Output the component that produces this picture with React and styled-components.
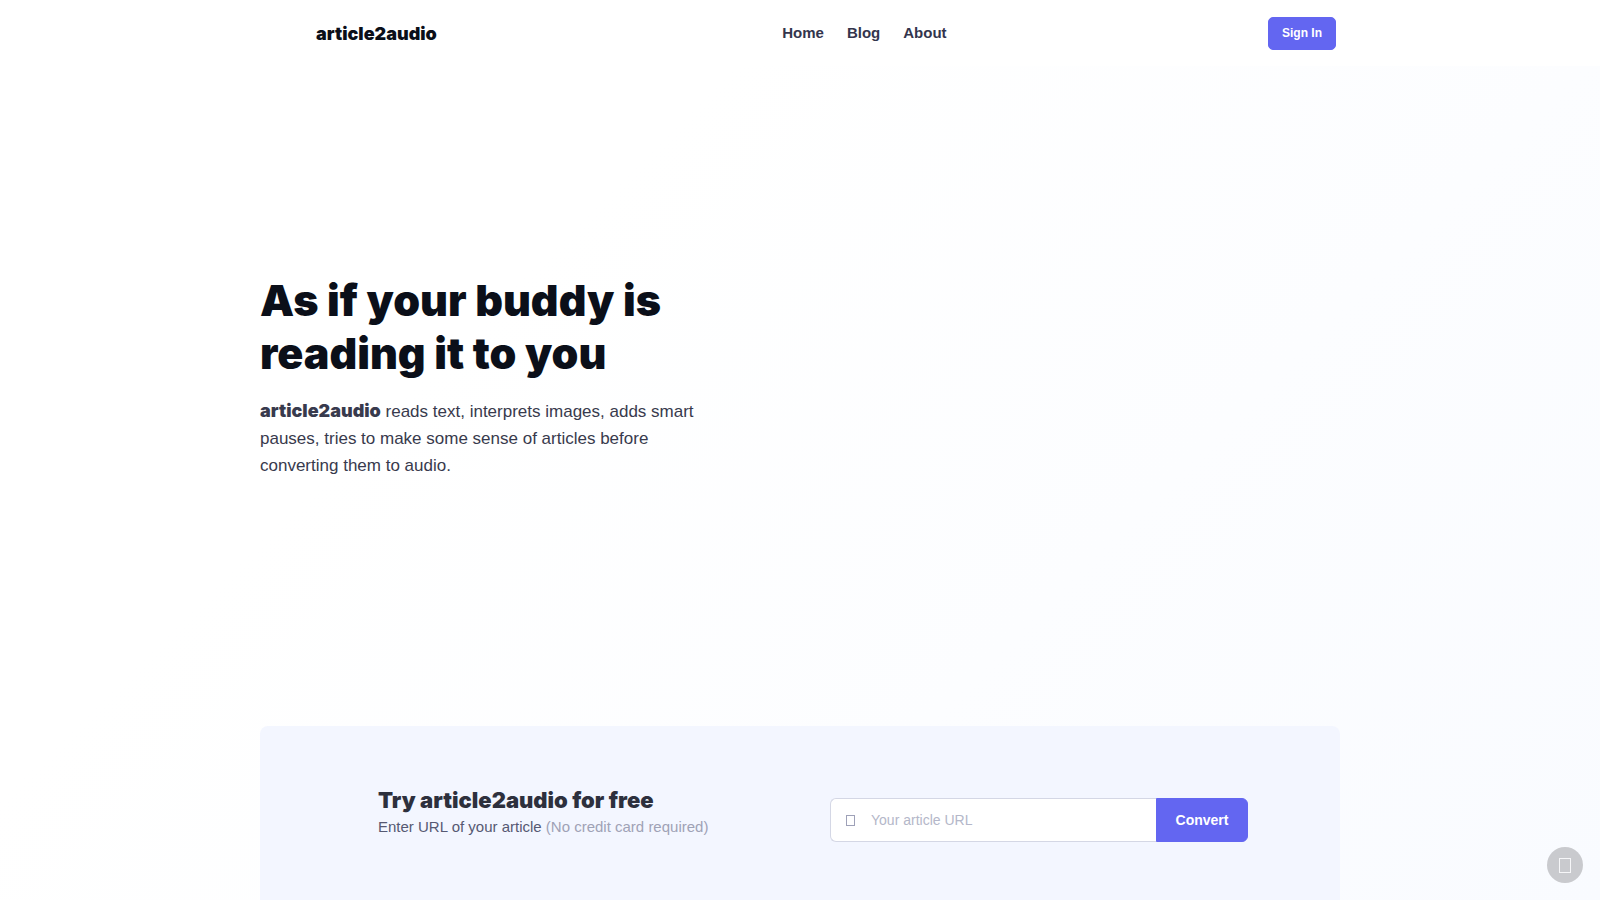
import React from "react";
import styled, { createGlobalStyle } from "styled-components";

const GlobalStyle = createGlobalStyle`
  *, *::before, *::after { box-sizing: border-box; }
  body {
    margin: 0;
    color: #33354d;
    background: #fff;
    font-family: "Liberation Sans", Arial, sans-serif;
    font-size: 15px;
    line-height: 24px;
  }
  a { color: inherit; text-decoration: none; }
  button, input { font: inherit; }
`;

const display = `
  font-family: Inter, "Arial Black", sans-serif;
  font-weight: 900;
`;

const Page = styled.div`
  min-height: 100vh;
  display: flex;
  flex-direction: column;
`;

const Header = styled.header`
  background: #fff;
`;

const HeaderInner = styled.div`
  max-width: 1080px;
  min-height: 66px;
  margin: 0 auto;
  padding: 0 4px 0 56px;
  display: flex;
  justify-content: space-between;
  align-items: center;
`;

const Brand = styled.a`
  ${display}
  color: #0b0f19;
  font-size: 18px;
  padding: 2px 24px 0 0;
`;

const Nav = styled.nav`
  display: flex;
  gap: 23px;
`;

const NavLink = styled.a`
  color: #33354d;
  font-weight: 700;
`;

const SignIn = styled.button`
  height: 33px;
  padding: 0 13px;
  border: 1px solid #6366f1;
  border-radius: 5px;
  background: #6366f1;
  color: #fff;
  font-size: 12px;
  line-height: 24px;
  font-weight: 700;
`;

const Main = styled.main`
  flex: 1;
  display: flex;
  flex-direction: column;
  background: linear-gradient(135deg, #fff 30%, #f9fbff 100%);
`;

const Container = styled.div`
  width: 100%;
  max-width: 1080px;
  margin: 0 auto;
`;

const Hero = styled(Container)`
  flex: 1;
  display: flex;
  flex-direction: column;
  justify-content: center;
  align-items: flex-start;
  padding-bottom: 40px;
`;

const Title = styled.h1`
  ${display}
  margin: 0 0 18px;
  max-width: 450px;
  color: #0b0f19;
  font-size: 43px;
  line-height: 53px;
`;

const Lead = styled.p`
  margin: 0;
  max-width: 440px;
  color: #383a4d;
  font-size: 17px;
  line-height: 27px;

  strong {
    ${display}
    font-size: 18px;
    line-height: 24px;
  }
`;

const TryCard = styled(Container)`
  display: grid;
  grid-template-columns: 1fr 418px;
  align-items: start;
  padding: 60px 92px 58px 118px;
  border-radius: 8px 8px 0 0;
  background: #f3f6ff;
`;

const TryTitle = styled.h2`
  ${display}
  margin: 0;
  color: #2d303d;
  font-size: 22px;
  line-height: 29px;
`;

const TryText = styled.p`
  margin: 0;
  color: #565973;
  line-height: 24px;

  span { color: #9fa2b6; }
`;

const UrlForm = styled.form`
  display: flex;
  height: 44px;
  margin-top: 12px;
`;

const UrlField = styled.label`
  flex: 1;
  display: flex;
  align-items: center;
  gap: 16px;
  padding-left: 15px;
  border: 1px solid #d4d7e5;
  border-right: 0;
  border-radius: 6px 0 0 6px;
  background: #fff;
`;

const UrlInput = styled.input`
  flex: 1;
  min-width: 0;
  padding: 0;
  border: 0;
  outline: 0;
  background: transparent;
  color: #565973;
  font-size: 14px;

  &::placeholder { color: #b4b7c9; opacity: 1; }
`;

const Convert = styled.button`
  width: 92px;
  border: 1px solid #6366f1;
  border-radius: 0 6px 6px 0;
  background: #6366f1;
  color: #fff;
  font-size: 14px;
  font-weight: 700;
`;

const ScrollTop = styled.a`
  position: fixed;
  right: 17px;
  bottom: 17px;
  width: 36px;
  height: 36px;
  display: flex;
  align-items: center;
  justify-content: center;
  border-radius: 50%;
  background: #c9cace;
  color: #f6f6f8;
`;

const Glyph = ({ width, height, color = "currentColor" }) => (
  <svg width={width} height={height} fill="none" stroke={color} aria-hidden="true">
    <rect x="0.5" y="0.5" width={width - 1} height={height - 1} />
  </svg>
);

export default function App() {
  return (
    <>
      <GlobalStyle />
      <Page id="top">
        <Header>
          <HeaderInner>
            <Brand href="#top">article2audio</Brand>
            <Nav>
              <NavLink href="#home">Home</NavLink>
              <NavLink href="#blog">Blog</NavLink>
              <NavLink href="#about">About</NavLink>
            </Nav>
            <SignIn type="button">Sign In</SignIn>
          </HeaderInner>
        </Header>
        <Main>
          <Hero as="section">
            <Title>As if your buddy is reading it to you</Title>
            <Lead>
              <strong>article2audio</strong> reads text, interprets images, adds smart pauses, tries to
              make some sense of articles before converting them to audio.
            </Lead>
          </Hero>
          <TryCard as="section">
            <div>
              <TryTitle>Try article2audio for free</TryTitle>
              <TryText>
                Enter URL of your article <span>(No credit card required)</span>
              </TryText>
            </div>
            <UrlForm onSubmit={(e) => e.preventDefault()}>
              <UrlField>
                <Glyph width={9} height={11} color="#9ea1b8" />
                <UrlInput type="url" placeholder="Your article URL" aria-label="Your article URL" />
              </UrlField>
              <Convert type="submit">Convert</Convert>
            </UrlForm>
          </TryCard>
        </Main>
        <ScrollTop href="#top" aria-label="Back to top">
          <Glyph width={12} height={15} />
        </ScrollTop>
      </Page>
    </>
  );
}
